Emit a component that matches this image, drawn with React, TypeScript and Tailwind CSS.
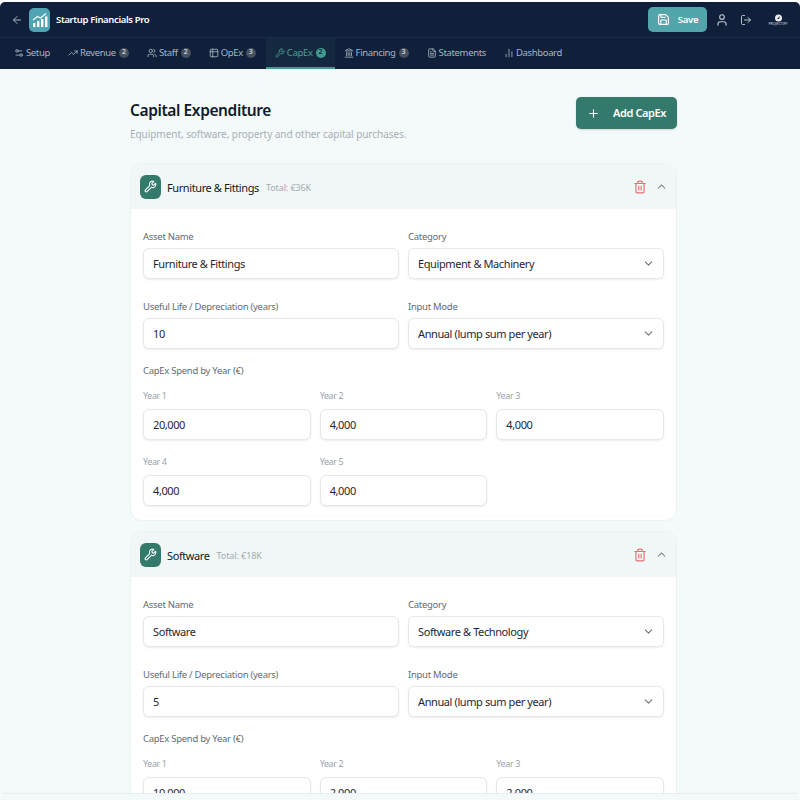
import React from "react";
import { ArrowLeft, Settings2, TrendingUp, Users, Table2, Wrench, Landmark, FileText, ChartNoAxesColumn, Save, User, LogOut, Trash2, ChevronUp, ChevronDown, Plus } from "lucide-react";

const tabs = [
  { label: "Setup", Icon: Settings2 },
  { label: "Revenue", Icon: TrendingUp, n: 2 },
  { label: "Staff", Icon: Users, n: 2 },
  { label: "OpEx", Icon: Table2, n: 3 },
  { label: "CapEx", Icon: Wrench, n: 2, active: true },
  { label: "Financing", Icon: Landmark, n: 3 },
  { label: "Statements", Icon: FileText },
  { label: "Dashboard", Icon: ChartNoAxesColumn },
];

function Label({ children }: { children: React.ReactNode }) {
  return <div className="pt-[1px] text-[9.5px] tracking-[-0.28px] leading-[14px] text-[#5f6b76] mb-[4px]">{children}</div>;
}

function Box({ children, select }: { children: React.ReactNode; select?: boolean }) {
  return (
    <div className="h-[31px] bg-white border border-[#e3e8ec] rounded-[6px] shadow-[0_1px_2px_rgba(0,0,0,0.08)] flex items-center justify-between pl-[9px] pr-[8px] text-[11px] tracking-[-0.4px] text-[#1d2733]">
      <span className="pt-[1px]">{children}</span>
      {select && <ChevronDown size={13} className="text-[#6b7680]" />}
    </div>
  );
}

function Field({ label, value, select }: { label: string; value: string; select?: boolean }) {
  return (
    <div>
      <Label>{label}</Label>
      <Box select={select}>{value}</Box>
    </div>
  );
}

function Year({ label, value }: { label: string; value: string }) {
  return (
    <div>
      <div className="text-[9px] tracking-[-0.4px] leading-[14px] text-[#9aa3ab] mb-[6px]">{label}</div>
      <Box>{value}</Box>
    </div>
  );
}

function Card({ name, total, category, life, years }: { name: string; total: string; category: string; life: string; years: string[] }) {
  return (
    <section className="bg-white rounded-[12px] border border-[#edf1f3] overflow-hidden shrink-0">
      <div className="h-[45px] bg-[#f1f7f7] flex items-center pl-[9px] pr-[8px]">
        <div className="w-[21px] h-[24px] rounded-[6px] bg-[#337a6c] flex items-center justify-center">
          <Wrench size={13} className="text-white" />
        </div>
        <span className="ml-[6px] pt-[3px] text-[11px] tracking-[-0.4px] text-[#111a24]">{name}</span>
        <span className="ml-[7px] pt-[3px] text-[9px] tracking-[-0.1px] text-[#a3abb2]">Total: {total}</span>
        <Trash2 size={14} className="ml-auto text-[#e57373]" />
        <ChevronUp size={13} className="ml-[8px] text-[#7d8790]" />
      </div>
      <div className="px-[12px] pt-[20px] pb-[14px]">
        <div className="grid grid-cols-2 gap-x-[9px] gap-y-[20px]">
          <Field label="Asset Name" value={name} />
          <Field label="Category" value={category} select />
          <Field label="Useful Life / Depreciation (years)" value={life} />
          <Field label="Input Mode" value="Annual (lump sum per year)" select />
        </div>
        <div className="mt-[15px] text-[9.5px] tracking-[-0.28px] leading-[14px] text-[#5f6b76]">CapEx Spend by Year (€)</div>
        <div className="mt-[11px] grid grid-cols-3 gap-x-[9px] gap-y-[15px]">
          {years.map((v, i) => (
            <Year key={i} label={`Year ${i + 1}`} value={v} />
          ))}
        </div>
      </div>
    </section>
  );
}

export default function App() {
  return (
    <div className="w-[800px] h-[800px] overflow-hidden bg-white flex flex-col font-['Noto_Sans',sans-serif]">
      <header className="shrink-0 h-[67px] mt-[2px] bg-[#10203a] rounded-t-[5px] flex flex-col">
        <div className="h-[36px] flex items-center border-b border-[#1a2c47] pl-[11px] pr-[10px]">
          <ArrowLeft size={12} className="text-[#a8b2bf]" />
          <div className="ml-[6px] w-[21px] h-[24px] rounded-[5px] bg-[#4fa3b3] flex items-center justify-center">
            <svg width="16" height="16" viewBox="0 0 16 16" fill="none">
              <rect x="1" y="11" width="2.4" height="4" fill="#fff" />
              <rect x="5" y="9" width="2.4" height="6" fill="#fff" />
              <rect x="9" y="7" width="2.4" height="8" fill="#fff" />
              <rect x="13" y="4.5" width="2.4" height="10.5" fill="#fff" />
              <path d="M1 8 L5.5 4.5 L8.5 6 L14 1.5" stroke="#fff" strokeWidth="1.1" />
            </svg>
          </div>
          <span className="ml-[6px] pt-[2px] text-[9.5px] tracking-[-0.35px] font-semibold text-white">Startup Financials Pro</span>
          <button className="ml-auto w-[59px] h-[25px] rounded-[5px] bg-[#52a5a9] flex items-center justify-center gap-[8px] text-white">
            <Save size={13} />
            <span className="pt-[1px] text-[9.5px] tracking-[-0.3px] font-semibold">Save</span>
          </button>
          <User size={14} className="ml-[8px] text-[#b9c2cd]" />
          <LogOut size={12} className="ml-[11px] text-[#b9c2cd]" />
          <div className="ml-[14px] w-[24px] flex flex-col items-center">
            <svg width="9" height="8" viewBox="0 0 9 8">
              <circle cx="4.5" cy="4" r="3.5" fill="#e8ebef" />
              <path d="M3 5 L6 2 L5 5 Z" fill="#10203a" />
            </svg>
            <span className="text-[3.5px] leading-[4px] text-[#d5dae0]">PROJECTIFY</span>
          </div>
        </div>
        <nav className="flex-1 flex pl-[5px]">
          {tabs.map(({ label, Icon, n, active }) => (
            <div
              key={label}
              className={`flex items-center gap-[2px] px-[9px] text-[9.5px] tracking-[-0.35px] border-b-2 ${active ? "border-[#3f9c8e] bg-[#14293f] text-[#4f9f93] ml-[1px]" : "border-transparent text-[#aab4c0]"}`}
            >
              <Icon size={10} />
              <span className="pt-[2px]">{label}</span>
              {n !== undefined && (
                <span className={`ml-[1px] w-[10px] h-[10px] rounded-full flex items-center justify-center text-[7px] tracking-normal font-semibold ${active ? "bg-[#3f9c8e] text-[#10203a]" : "bg-[#46505f] text-[#c9d0d8]"}`}>{n}</span>
              )}
            </div>
          ))}
        </nav>
      </header>
      <main className="flex-1 min-h-0 overflow-hidden bg-[#f4f9fa] flex flex-col rounded-b-[4px] border-b border-[#e8eef0]">
        <div className="ml-[130px] w-[547px] flex flex-col">
          <div className="pt-[28px] flex justify-between items-start">
            <div>
              <h1 className="text-[15.5px] tracking-[-0.4px] leading-[22px] mt-[2px] font-semibold text-[#0f1b2a]">Capital Expenditure</h1>
              <p className="mt-[6px] text-[10px] tracking-[-0.05px] leading-[15px] text-[#a7afb6]">Equipment, software, property and other capital purchases.</p>
            </div>
            <button className="w-[101px] h-[32px] rounded-[5px] bg-[#337a6c] flex items-center justify-center gap-[13px] text-white shadow-[0_1px_2px_rgba(0,0,0,0.15)]">
              <Plus size={13} />
              <span className="text-[11px] tracking-[-0.4px] font-semibold">Add CapEx</span>
            </button>
          </div>
          <div className="mt-[21px] flex flex-col gap-[10px]">
            <Card name="Furniture & Fittings" total="€36K" category="Equipment & Machinery" life="10" years={["20,000", "4,000", "4,000", "4,000", "4,000"]} />
            <Card name="Software" total="€18K" category="Software & Technology" life="5" years={["10,000", "2,000", "2,000", "2,000", "2,000"]} />
          </div>
        </div>
      </main>
      <div className="shrink-0 h-[6px] bg-[#f4f9fa]"></div>
    </div>
  );
}
